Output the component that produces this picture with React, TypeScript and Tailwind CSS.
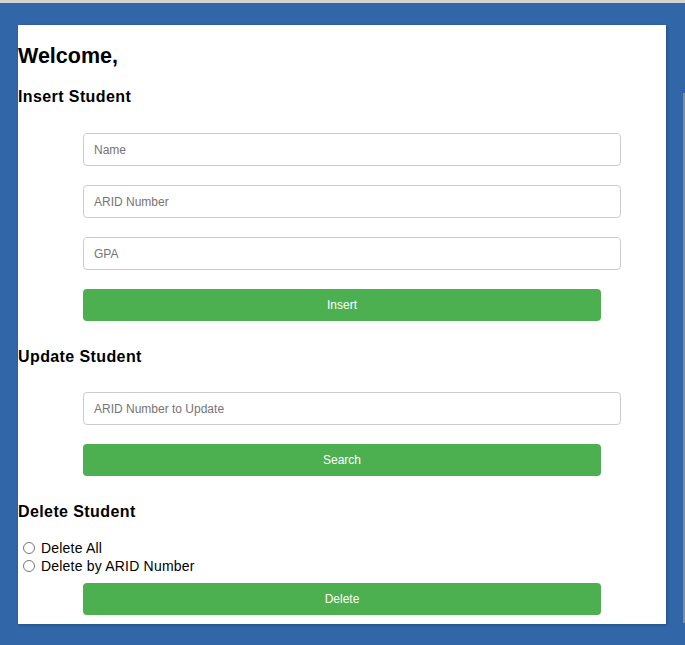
import React from "react";

function Field({ placeholder }: { placeholder: string }) {
  return (
    <input
      type="text"
      placeholder={placeholder}
      className="block w-[538px] h-[33px] px-[10px] border border-[#cccccc] rounded-[4px] text-[12px] text-[#333] placeholder:text-[#757575] bg-white outline-none"
    />
  );
}

function GreenButton({ label }: { label: string }) {
  return (
    <button className="block w-[518px] h-[32px] rounded-[4px] bg-[#4caf50] text-white text-[12px]">
      {label}
    </button>
  );
}

function SectionTitle({ children, className }: { children: React.ReactNode; className?: string }) {
  return (
    <h3 className={"text-[16px] leading-[18px] font-bold tracking-[0.4px] text-black " + (className ?? "")}>
      {children}
    </h3>
  );
}

export default function App() {
  return (
    <div className="w-[685px] h-[645px] bg-[#3166a8] font-['Liberation_Sans',Arial,sans-serif] overflow-hidden">
      <div className="h-[3px] bg-[#d3d3d3]" />
      <div className="flex pt-[22px] pl-[18px]">
        <div className="w-[648px] h-[599px] bg-white pt-[19px] shadow-[1px_1px_3px_rgba(0,0,0,0.25)]">
          <h2 className="text-[21.5px] leading-[25px] font-bold text-black">Welcome,</h2>

          <SectionTitle className="mt-[19px]">Insert Student</SectionTitle>
          <div className="w-[518px] mx-auto mt-[27px] flex flex-col gap-[19px]">
            <Field placeholder="Name" />
            <Field placeholder="ARID Number" />
            <Field placeholder="GPA" />
            <GreenButton label="Insert" />
          </div>

          <SectionTitle className="mt-[27px]">Update Student</SectionTitle>
          <div className="w-[518px] mx-auto mt-[26px] flex flex-col gap-[19px]">
            <Field placeholder="ARID Number to Update" />
            <GreenButton label="Search" />
          </div>

          <SectionTitle className="mt-[27px]">Delete Student</SectionTitle>
          <div className="mt-[18px] text-[14px] tracking-[0.2px] leading-[18px] text-black">
            <label className="flex items-center">
              <input type="radio" name="del" className="ml-[5px] mr-[5px] w-[12px] h-[12px]" />
              <span className="ml-[1px]">Delete All</span>
            </label>
            <label className="flex items-center">
              <input type="radio" name="del" className="ml-[5px] mr-[5px] w-[12px] h-[12px]" />
              <span className="ml-[1px]">Delete by ARID Number</span>
            </label>
          </div>
          <div className="w-[518px] mx-auto mt-[8px]">
            <GreenButton label="Delete" />
          </div>
        </div>
        <div className="ml-[17px] mt-[68px] w-[2px] h-[530px] bg-[#8a8a8a]" />
      </div>
    </div>
  );
}
